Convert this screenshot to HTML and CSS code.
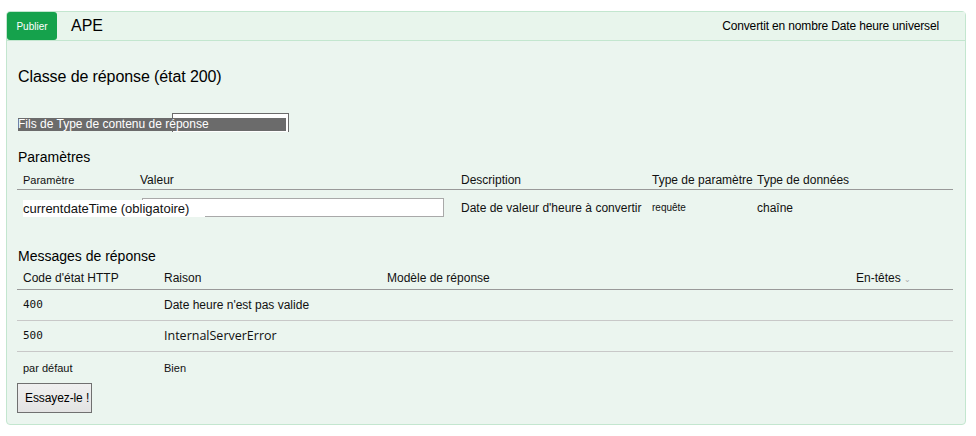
FILE: index.html
```html
<!DOCTYPE html>
<html lang="fr">
<head>
<meta charset="utf-8">
<title>APE</title>
<link rel="stylesheet" href="styles.css">
</head>
<body>
<div class="panel">
  <div class="head">
    <span class="verb">Publier</span>
    <span class="path">APE</span>
    <span class="summary">Convertit en nombre Date heure universel</span>
  </div>
  <div class="content">
    <h3 class="resp-class">Classe de réponse (état 200)</h3>
    <div class="ctype">
      <span class="ctype-box"></span>
      <span class="ctype-label">Fils de Type de contenu de réponse</span>
    </div>
    <h4 class="section">Paramètres</h4>
    <div class="ptable">
      <div class="prow phead">
        <span class="c-small">Paramètre</span>
        <span>Valeur</span>
        <span>Description</span>
        <span>Type de paramètre</span>
        <span>Type de données</span>
      </div>
      <div class="prow pbody">
        <span class="pname">currentdateTime (obligatoire)</span>
        <span class="pinput"></span>
        <span class="pdesc">Date de valeur d'heure à convertir</span>
        <span class="ptype">requête</span>
        <span class="pdata">chaîne</span>
      </div>
    </div>
    <h4 class="section section-msg">Messages de réponse</h4>
    <div class="rtable">
      <div class="rrow rhead">
        <span>Code d'état HTTP</span>
        <span>Raison</span>
        <span>Modèle de réponse</span>
        <span>En-têtes <i class="caret">&#8964;</i></span>
      </div>
      <div class="rrow rline">
        <span class="code">400</span>
        <span>Date heure n'est pas valide</span>
        <span></span>
        <span></span>
      </div>
      <div class="rrow rline">
        <span class="code">500</span>
        <span class="ise">InternalServerError</span>
        <span></span>
        <span></span>
      </div>
      <div class="rrow rlast">
        <span class="small">par défaut</span>
        <span class="small">Bien</span>
        <span></span>
        <span></span>
      </div>
    </div>
    <button class="try">Essayez-le !</button>
  </div>
</div>
</body>
</html>
```

FILE: styles.css
```css
* { box-sizing: border-box; }
html, body { margin: 0; padding: 0; background: #ffffff; }
body { font-family: "Liberation Sans", Arial, sans-serif; color: #111; }

.panel {
  margin: 11px 0 0 6px;
  width: 960px;
  height: 414px;
  background: #ebf5ef;
  border: 1px solid #c3e6cf;
  border-radius: 4px;
}

.head {
  display: flex;
  align-items: center;
  height: 29px;
  border-bottom: 1px solid #c3e6cf;
  background: #e8f5ec;
}
.verb {
  width: 50px;
  height: 28px;
  background: #15a24c;
  color: #fff;
  font-size: 10px;
  border-radius: 3px;
  display: flex;
  align-items: center;
  justify-content: center;
  align-self: flex-start;
}
.path {
  font-size: 16px;
  margin-left: 14px;
  color: #000;
}
.summary {
  margin-left: auto;
  margin-right: 26px;
  font-size: 12px;
  letter-spacing: -0.15px;
  color: #000;
}

.content { padding: 0 0 0 10px; }

.resp-class {
  margin: 26px 0 0 1px;
  font-size: 16px;
  font-weight: normal;
  line-height: 20px;
  color: #000;
  letter-spacing: -0.1px;
}

.ctype {
  display: grid;
  width: 271px;
  margin: 26px 0 0 1px;
  height: 19px;
}
.ctype-box {
  grid-area: 1 / 1;
  justify-self: end;
  width: 117px;
  height: 19px;
  background: #fff;
  border: 1px solid #6b6b6b;
  border-bottom: none;
}
.ctype-label {
  grid-area: 1 / 1;
  position: relative;
  z-index: 2;
  align-self: end;
  width: 268px;
  height: 13px;
  margin-bottom: 1px;
  background: #6b6b6b;
  color: #fff;
  font-size: 12px;
  line-height: 13px;
  white-space: nowrap;
  overflow: hidden;
}

.section {
  margin: 16px 0 0 1px;
  font-size: 14px;
  font-weight: normal;
  line-height: 18px;
  color: #000;
}
.section-msg { margin-top: 22px; }

.ptable, .rtable { width: 936px; }
.prow {
  display: grid;
  grid-template-columns: 117px 321px 191px 105px 202px;
  align-items: center;
}
.prow > span { padding-left: 6px; font-size: 12px; white-space: nowrap; }
.phead { height: 20px; border-bottom: 1px solid #999; margin-top: 4px; }
.phead .c-small { font-size: 11px; }
.pbody { height: 35px; }
.pbody > span { grid-row: 1; }
.pname {
  grid-column: 1 / 3;
  position: relative;
  z-index: 1;
  justify-self: start;
  padding-left: 0 !important;
  margin-left: 6px;
  width: 182px;
  height: 17px;
  margin-top: 2px;
  line-height: 17px;
  background: #fff;
  font-size: 13px !important;
}
.pinput {
  grid-column: 2 / 4;
  justify-self: start;
  margin-left: 8px;
  width: 302px;
  height: 19px;
  background: #fff;
  border: 1px solid #a9a9a9;
  padding: 0 !important;
}
.pdesc { grid-column: 3; }
.ptype { grid-column: 4; font-size: 10px !important; }
.pdata { grid-column: 5; }

.rrow {
  display: grid;
  grid-template-columns: 141px 223px 469px 103px;
  align-items: center;
}
.rrow > span { padding-left: 6px; font-size: 12px; white-space: nowrap; }
.rhead { height: 22px; margin-top: 3px; border-bottom: 1px solid #999; }
.rhead > span { padding-bottom: 2px; }
.caret { font-style: normal; color: #aaa; font-size: 8px; }
.rline { height: 31px; border-bottom: 1px solid #c8c8c8; }
.rline > span { padding-bottom: 1px; }
.rlast { height: 31px; }
.code { font-family: "DejaVu Sans Mono", monospace; font-size: 11px !important; }
.ise { font-family: "Open Sans", sans-serif; font-size: 12.5px !important; }
.small { font-size: 11px !important; }

.try {
  display: block;
  width: 75px;
  height: 30px;
  margin: 0;
  padding: 0 0 0 7px;
  text-align: left;
  font-family: "Liberation Sans", Arial, sans-serif;
  font-size: 12px;
  letter-spacing: -0.1px;
  color: #000;
  background: linear-gradient(#f0f0f0, #e3e3e3);
  border: 1px solid #707070;
  overflow: hidden;
  white-space: nowrap;
}
```
